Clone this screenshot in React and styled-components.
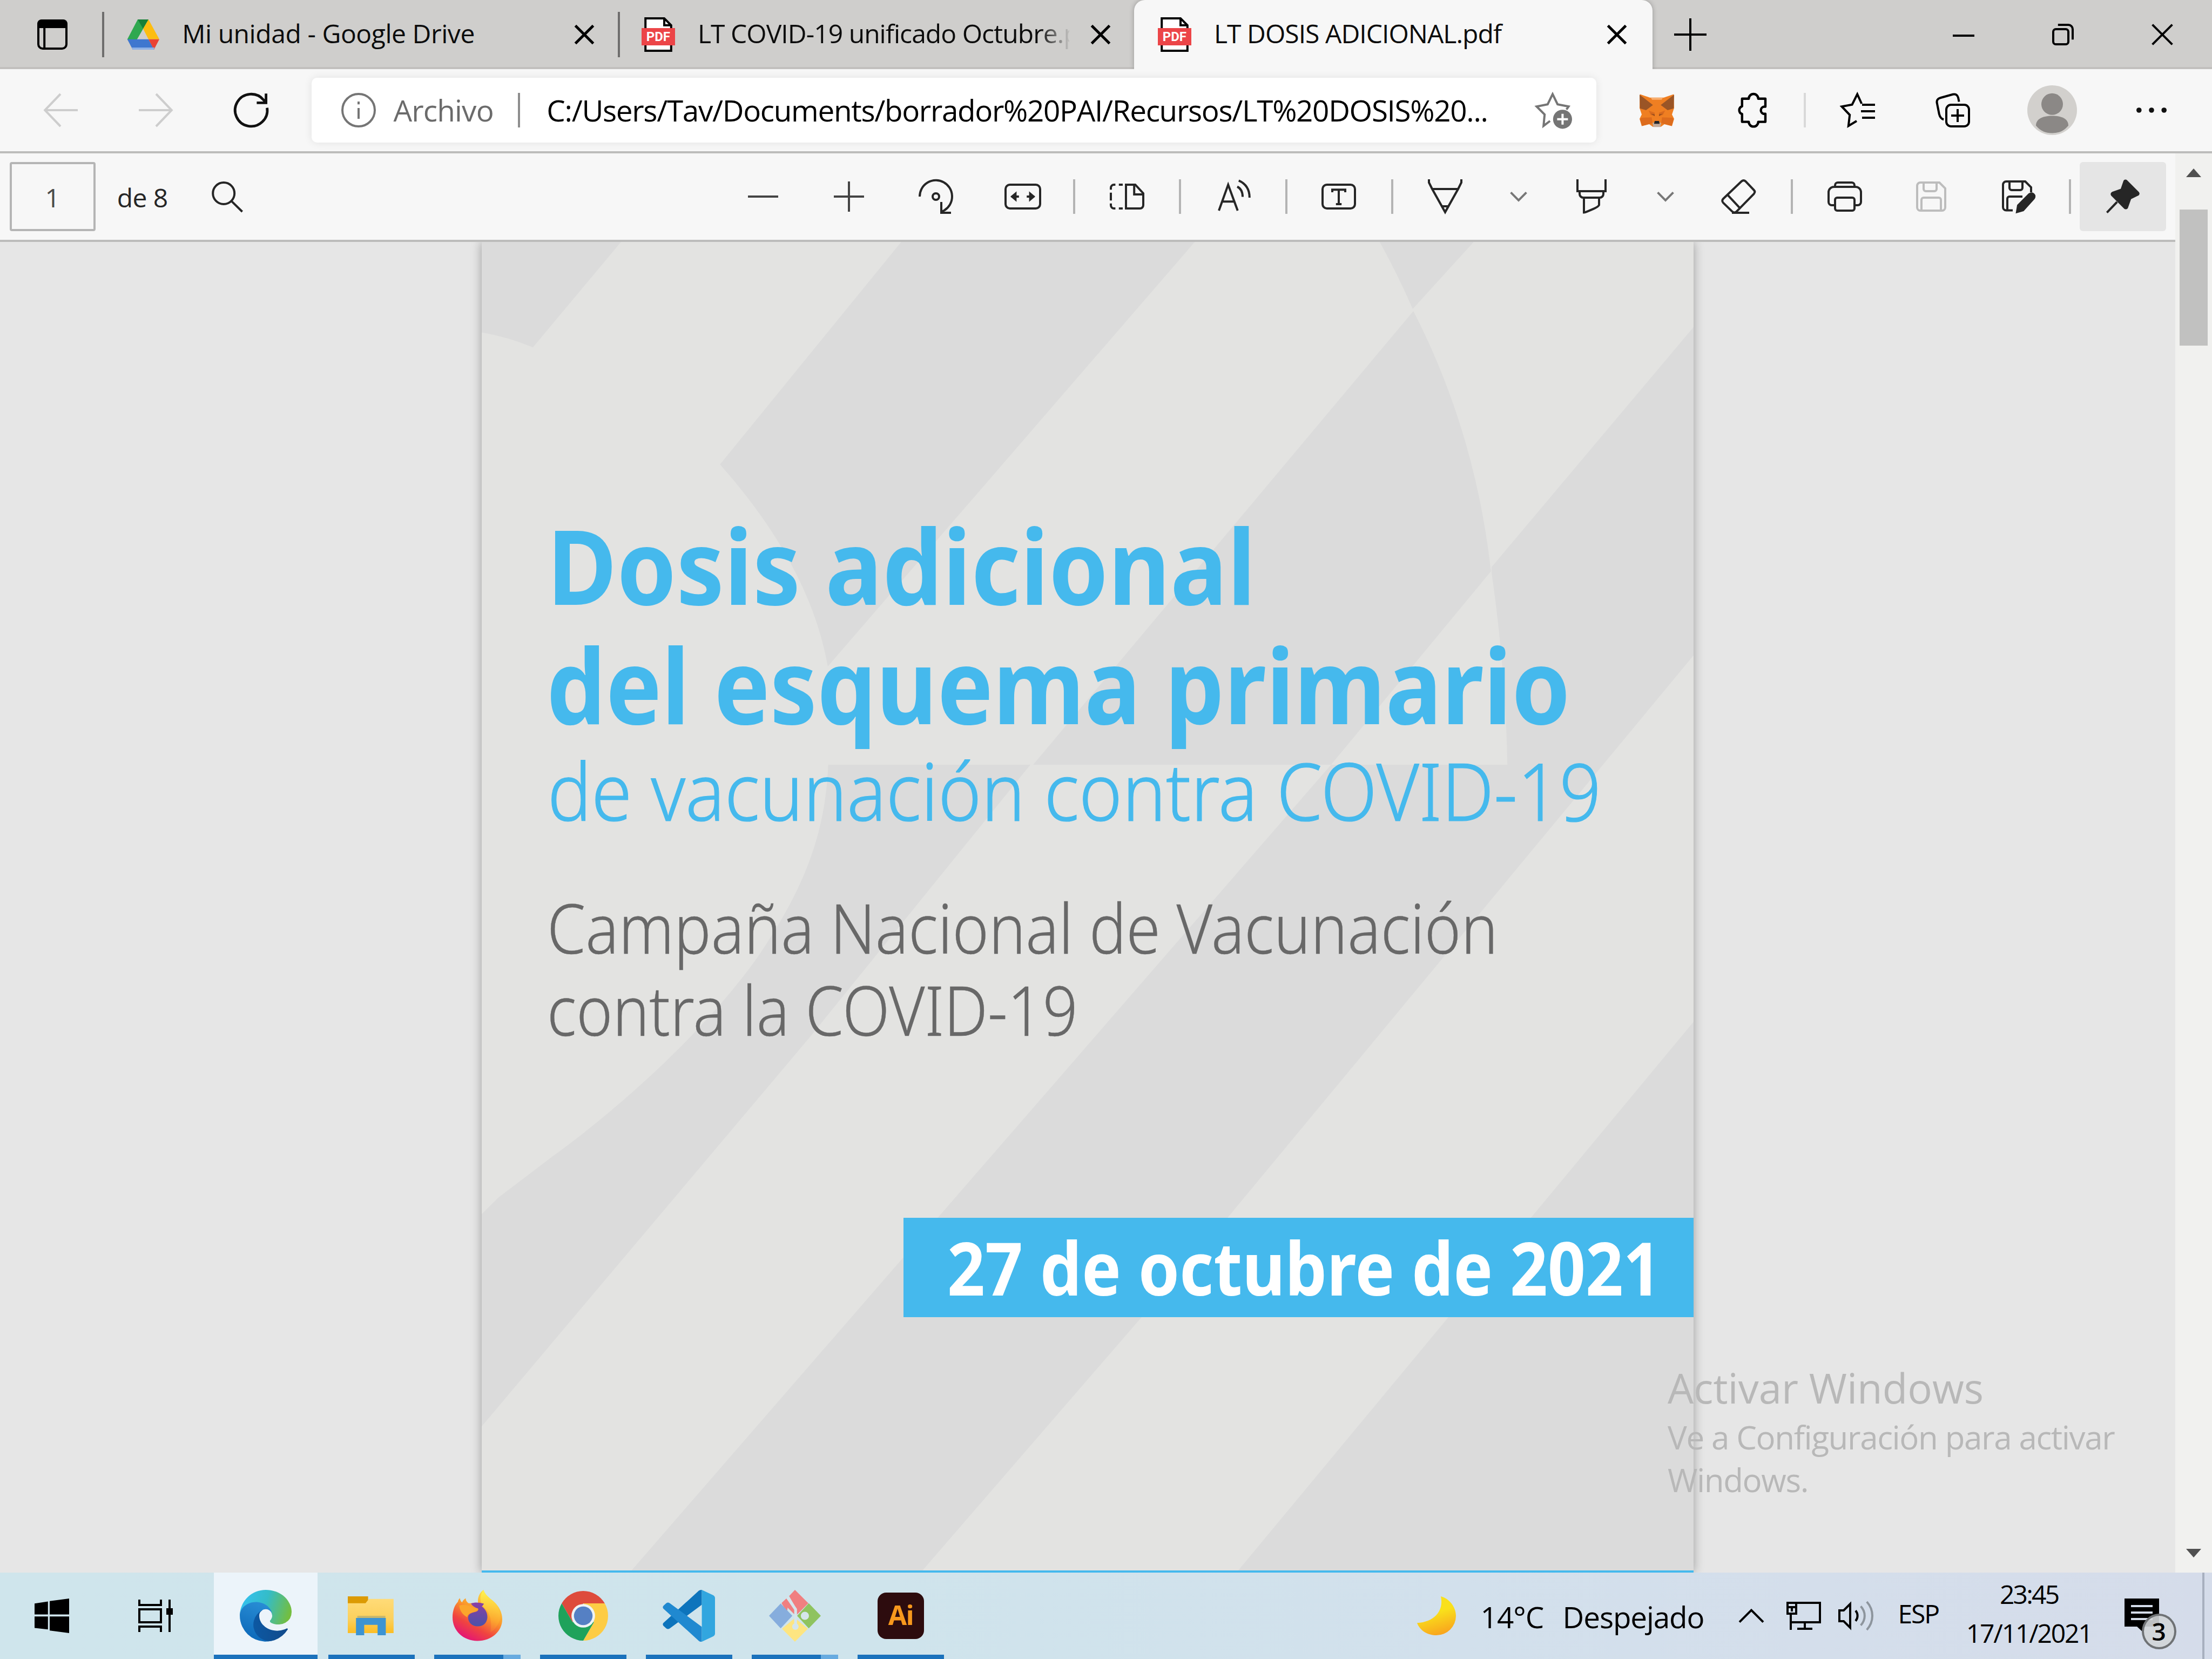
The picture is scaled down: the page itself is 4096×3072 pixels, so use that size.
import React from "react";
import styled, { createGlobalStyle } from "styled-components";

/* One rem is one desktop pixel of a 1024x768 screen. */
const GlobalStyle = createGlobalStyle`
  html { font-size: 4px; }
  body { margin: 0; background: #e6e6e6; }
  *, *::before, *::after { box-sizing: border-box; }
`;

const ui = `"Open Sans", "Noto Sans", sans-serif`;
const docFont = `"Noto Sans", "Open Sans", sans-serif`;

const Screen = styled.div`
  position: relative;
  width: 1024rem;
  height: 768rem;
  display: flex;
  flex-direction: column;
  overflow: hidden;
  background: #e6e6e6;
  color: #000;
  font-family: ${ui};
`;

const Icon = styled.svg`
  display: block;
  flex: none;
  width: ${(p) => p.$w || 16}rem;
  height: ${(p) => p.$h || 16}rem;
  margin-left: ${(p) => p.$ml || 0}rem;
  color: ${(p) => p.$c || "#1a1a1a"};
  fill: none;
  stroke: currentColor;
  stroke-width: 1;
  overflow: visible;
`;

const Text = styled.span`
  display: block;
  flex: none;
  white-space: nowrap;
  width: ${(p) => (p.$w ? `${p.$w}rem` : "auto")};
  margin-left: ${(p) => p.$ml || 0}rem;
  margin-top: ${(p) => p.$mt || 0}rem;
  font-size: ${(p) => p.$fs || 12}rem;
  line-height: 1.36;
  letter-spacing: ${(p) => p.$ls || 0}rem;
  color: ${(p) => p.$c || "#000"};
`;

const Rule = styled.div`
  flex: none;
  width: 1rem;
  height: ${(p) => p.$h || 16}rem;
  margin-left: ${(p) => p.$ml || 0}rem;
  background: ${(p) => p.$c || "#b4b4b4"};
`;

/* ---------- tab strip ---------- */

const TabStrip = styled.header`
  flex: none;
  display: flex;
  align-items: center;
  height: 32rem;
  background: linear-gradient(#cfcecc 0 31rem, #c2c0be 31rem 32rem);
`;

const TabBox = styled.div`
  position: relative;
  flex: none;
  display: grid;
  grid-template-columns: 16rem 1fr 9rem;
  column-gap: 10rem;
  align-items: center;
  width: ${(p) => p.$w}rem;
  height: 32rem;
  padding: 0 ${(p) => (p.$active ? 12 : 11)}rem 0 ${(p) => (p.$active ? 11 : 10)}rem;
  border-radius: 5rem 5rem 0 0;
  background: ${(p) => (p.$active ? "#f7f7f7" : "transparent")};
  box-shadow: ${(p) => (p.$active ? "0 0 2.5rem rgba(0,0,0,.28)" : "none")};
  clip-path: ${(p) => (p.$active ? "inset(0 -4rem 0 -4rem)" : "none")};
  z-index: ${(p) => (p.$active ? 1 : 0)};
`;

const TabTitle = styled(Text)`
  overflow: hidden;
  margin-bottom: 1.2rem;
  mask-image: ${(p) => (p.$fade ? "linear-gradient(90deg, #000 158rem, transparent 173rem)" : "none")};
`;

const CloseIcon = ({ size = 9, w = 1.3, ml = 0 }) => (
  <Icon $w={size} $h={size} $ml={ml} $c="#000" viewBox="0 0 10 10">
    <path strokeWidth={w} d="M.4.4 9.6 9.6M9.6.4.4 9.6" />
  </Icon>
);

const DriveLogo = () => (
  <Icon viewBox="0 0 16 16">
    <g stroke="none">
      <path fill="#2fa84f" d="M5.5 1h5L5.200 10.200 3 13.600.7 10.200z" />
      <path fill="#188038" d="M5.500 1h5L8 5.300z" />
      <path fill="#fdbd10" d="M10.500 1l5 9.200h-5L8 5.300z" />
      <path fill="#3f77cf" d="M.7 10.200h9.800l2.600 4.800H3.200z" />
      <path fill="#ea4335" d="M10.500 10.200h5L13 15z" />
      <path fill="#8fb1e6" d="M2.700 14h10.600l-.4 1H3.200z" />
    </g>
  </Icon>
);

const PdfBadge = styled.span`
  position: absolute;
  left: 0;
  top: 5rem;
  width: 15.4rem;
  height: 8rem;
  background: #ec4548;
  color: #fff;
  font: 700 6rem/8rem "Roboto", sans-serif;
  text-align: center;
`;
const PdfWrap = styled.span`
  position: relative;
  width: 16rem;
  height: 16rem;
`;
const PdfFile = () => (
  <PdfWrap>
    <Icon $c="#000" viewBox="0 0 16 16">
      <path fill="#fff" d="M1.800.5h8.700l3.200 3.200v11.800H1.800z" />
      <path d="M10.500.5v3.200h3.200" />
    </Icon>
    <PdfBadge>PDF</PdfBadge>
  </PdfWrap>
);

const Tab = ({ w, icon, title, ls, active, fade }) => (
  <TabBox $w={w} $active={active}>
    {icon}
    <TabTitle $ls={ls} $fade={fade} $c="#0c0c0c">{title}</TabTitle>
    <CloseIcon w={1.4} />
  </TabBox>
);

/* ---------- navigation bar ---------- */

const NavBar = styled.nav`
  flex: none;
  display: flex;
  align-items: center;
  height: 39rem;
  padding-left: 20rem;
  background: #f7f7f7;
  border-bottom: 1rem solid #bcbcbb;
`;

const Address = styled.div`
  flex: none;
  display: flex;
  align-items: center;
  width: 594.6rem;
  height: 30rem;
  margin-left: 20rem;
  padding-left: 13.8rem;
  background: #fff;
  border-radius: 2.5rem;
  box-shadow: 0 0 4rem rgba(0, 0, 0, 0.09);
`;

const Fox = () => (
  <Icon $ml={20} viewBox="0 0 16 16">
    <g stroke="none">
      <path fill="#ef7f22" d="M.2.6 4.800 2.200h6.400L15.800.6 16 7l-1 3 1 2-1 3.400-3.500-.9-1.600 1.200H6.100l-1.600-1.200-3.500.9L0 12l1-2-1-3z" />
      <path fill="#9a5526" d="M0 .8 6.200 5.600 3 8 .2 7.200zM16 .8 9.800 5.600 13 8l2.800-.8z" />
      <path fill="#f8ae70" d="M5.200 2.200h5.600l-.6 1H5.800z" />
      <path fill="#d86a1e" d="M4.200 8.200 7 9.200v1.600l-1.800-.6zM11.800 8.200 9 9.200v1.600l1.800-.6z" />
      <path fill="#8a4a1e" d="M5.200 9.600 7 10v.7zM10.800 9.600 9 10v.7z" />
      <path fill="#dd6c1d" d="m1 11.500 4.600-.2L6 14 4.500 14.400l-3.400.9-.9-3.200zM15 11.500l-4.600-.2L10 14l1.500.4 3.400.9.900-3.200z" />
      <path fill="#c4ab9a" d="M6 13.800h4l-.4 2H6.400z" />
      <path fill="#20242a" d="M7 13h2l.3 1.300H6.700z" />
    </g>
  </Icon>
);

/* ---------- viewer ---------- */

const Viewer = styled.div`
  flex: 1;
  display: flex;
  min-height: 0;
`;
const ViewerMain = styled.main`
  flex: none;
  width: 1007rem;
  display: flex;
  flex-direction: column;
`;
const PdfBar = styled.div`
  flex: none;
  display: flex;
  align-items: center;
  height: 41rem;
  padding-left: 4.4rem;
  background: #f7f7f7;
  border-bottom: 1rem solid #bcbcbb;
`;
const PageInput = styled.div`
  flex: none;
  display: flex;
  align-items: center;
  justify-content: center;
  width: 39.8rem;
  height: 32rem;
  border: 1rem solid #b5b5b5;
  border-radius: 1rem;
`;
const PinButton = styled.div`
  flex: none;
  display: flex;
  align-items: center;
  justify-content: center;
  width: 40rem;
  height: 32rem;
  margin-left: 4rem;
  border-radius: 1.5rem;
  background: #e5e5e5;
`;

const Scrollbar = styled.aside`
  flex: none;
  display: flex;
  flex-direction: column;
  align-items: center;
  width: 17rem;
  padding: 7rem 0 7rem 0;
  background: #f1f1ef;
`;
const ScrollThumb = styled.div`
  width: 12.8rem;
  height: 63rem;
  margin: 15rem 0 auto;
  background: #c1c1c0;
`;

const Canvas = styled.div`
  flex: 1;
  display: flex;
  padding-left: 223rem;
  background: #e6e6e6;
  overflow: hidden;
`;
const Page = styled.article`
  position: relative;
  display: flex;
  flex-direction: column;
  width: 561rem;
  height: 616rem;
  padding-top: 122.1rem;
  background: #e3e3e1;
  border-bottom: 1rem solid #45b9ed;
  box-shadow: 0 0 4.5rem rgba(0, 0, 0, 0.32);
  font-family: ${docFont};
`;
const Backdrop = styled.svg`
  position: absolute;
  inset: 0;
  width: 561rem;
  height: 615rem;
  fill: #dbdbdb;
`;
const Line = styled.div`
  position: relative;
  width: max-content;
  margin: ${(p) => p.$mt || 0}rem 0 0 ${(p) => p.$x}rem;
  white-space: nowrap;
  font-size: ${(p) => p.$fs}rem;
  line-height: ${(p) => p.$lh}rem;
  font-weight: ${(p) => p.$fw};
  color: ${(p) => p.$c};
  -webkit-text-stroke: ${(p) => p.$thick || 0}rem ${(p) => p.$c};
  transform: scaleX(${(p) => p.$sx || 1});
  transform-origin: 0 50%;
`;
const DateBanner = styled.div`
  position: relative;
  align-self: flex-end;
  width: 365.8rem;
  height: 46rem;
  margin-top: 77.3rem;
  background: #45b9ed;
`;

const Watermark = styled.div`
  position: absolute;
  left: 772rem;
  top: 629.5rem;
`;

/* ---------- taskbar ---------- */

const Taskbar = styled.footer`
  flex: none;
  display: flex;
  align-items: center;
  height: 40rem;
  background: linear-gradient(90deg, #cfe5ec, #cfe4ec 40%, #d2e0ec 66%, #d4deeb 82%, #d5dcea);
`;
const AppSlot = styled.div`
  position: relative;
  flex: none;
  display: flex;
  align-items: center;
  justify-content: center;
  width: 48rem;
  height: 40rem;
  margin-left: ${(p) => p.$ml || 0}rem;
  background: ${(p) => (p.$active ? "#ecf4fa" : "transparent")};
  &::after {
    content: "";
    display: ${(p) => (p.$open ? "block" : "none")};
    position: absolute;
    bottom: 0;
    left: ${(p) => (p.$active ? 0 : 4)}rem;
    right: ${(p) => (p.$active ? 0 : 4)}rem;
    height: 2rem;
    background: ${(p) => (p.$multi ? "linear-gradient(90deg, #1b72bc 32rem, #68abe0 32rem)" : "#1b72bc")};
  }
`;
const Clock = styled.div`
  flex: none;
  width: 60rem;
  margin-left: 9.8rem;
  margin-bottom: 2rem;
  display: flex;
  flex-direction: column;
  align-items: center;
  gap: 1.7rem;
`;
const Notice = styled.div`
  position: relative;
  flex: none;
  width: 16rem;
  height: 16rem;
  margin-left: 14.3rem;
`;
const NoticeCount = styled.span`
  position: absolute;
  left: 7.8rem;
  top: 7rem;
  width: 16rem;
  height: 16.5rem;
  border: 1rem solid #6f7275;
  border-radius: 50%;
  background: rgba(210, 213, 216, 0.9);
  font: 600 11.5rem/14rem ${ui};
  text-align: center;
`;

const AiTile = styled.div`
  width: 21.6rem;
  height: 21.6rem;
  border-radius: 4rem;
  background: #2d0c0e;
  color: #f7981d;
  font: 700 12.5rem/20.6rem ${ui};
  letter-spacing: -0.4rem;
  text-align: center;
`;

const EdgeLogo = () => (
  <Icon $w={24} $h={24} viewBox="0 0 256 256">
    <defs>
      <linearGradient id="eg1" x1="0" x2="1"><stop offset="0" stopColor="#0c59a4" /><stop offset="1" stopColor="#114a8b" /></linearGradient>
      <linearGradient id="eg2" x1=".6" y1="0" x2=".3" y2="1"><stop offset="0" stopColor="#2a8fd6" /><stop offset="1" stopColor="#0b67b8" /></linearGradient>
      <linearGradient id="eg3" x1="0" y1=".3" x2="1" y2=".5"><stop offset="0" stopColor="#35c1f1" /><stop offset=".5" stopColor="#34bcc8" /><stop offset="1" stopColor="#74be3f" /></linearGradient>
    </defs>
    <g stroke="none">
      <path transform="translate(-4.63 -4.92)" fill="url(#eg1)" d="M235.68 195.46a93.73 93.73 0 0 1-10.54 4.71 101.87 101.87 0 0 1-35.9 6.46c-47.32 0-88.54-32.55-88.54-74.32A31.48 31.48 0 0 1 117.13 105c-42.8 1.8-53.8 46.4-53.8 72.53 0 73.88 68.09 81.37 82.76 81.37 7.91 0 19.84-2.3 27-4.56l1.31-.44a128.34 128.34 0 0 0 66.6-52.8 4 4 0 0 0-5.32-5.64z" />
      <path fill="url(#eg2)" d="M105.73 241.42A79.2 79.2 0 0 1 83 220.08a80.72 80.72 0 0 1 29.5-120.79c3.12-1.47 8.45-4.13 15.54-4a32.35 32.35 0 0 1 25.69 13 31.88 31.88 0 0 1 6.36 18.66c0-.21 24.46-79.6-80-79.6-43.9 0-80 41.66-80 78.21a130.15 130.15 0 0 0 12.11 56 128 128 0 0 0 156.38 67.11 75.55 75.55 0 0 1-62.78-8z" />
      <path fill="url(#eg3)" d="M152.33 148.86c-.81 1.05-3.3 2.5-3.3 5.66 0 2.61 1.7 5.12 4.72 7.23 14.38 10 41.49 8.68 41.56 8.68a59.56 59.56 0 0 0 30.27-8.35A61.38 61.38 0 0 0 256 109.19c.26-22.41-8-37.31-11.34-43.91C223.46 23.84 177.72 0 128 0A128 128 0 0 0 0 126.2c.48-36.54 36.8-66.05 80-66.05 3.5 0 23.46.34 42 10.07 16.34 8.58 24.9 18.94 30.85 29.21 6.18 10.67 7.28 24.15 7.28 29.52s-2.74 13.33-7.8 19.91z" />
    </g>
  </Icon>
);

const FolderLogo = () => (
  <Icon $w={22} $h={18} viewBox="0 0 22 18">
    <defs>
      <linearGradient id="fo" x1="0" y1="0" x2="0" y2="1"><stop offset="0" stopColor="#ffdb78" /><stop offset=".6" stopColor="#fbd05c" /><stop offset="1" stopColor="#fcbd22" /></linearGradient>
    </defs>
    <g stroke="none">
      <path fill="#dc9a04" d="M0 0h9.400v3.400H0z" />
      <path fill="url(#fo)" d="M0 3.200h8.200L9.800 1.200h11.400V17H0z" />
      <path fill="#c9b76b" d="M4.400 9h13v1.300h-13z" />
      <path fill="#3c94d2" d="M3.800 10h13.800v8h-3.800v-4.800H7.600V18H3.800z" />
    </g>
  </Icon>
);

const FirefoxLogo = () => (
  <Icon $w={24} $h={24} viewBox="0 0 24 24">
    <defs>
      <linearGradient id="ff1" x1=".8" y1=".1" x2=".3" y2="1"><stop offset="0" stopColor="#fde047" /><stop offset=".4" stopColor="#fb9a2b" /><stop offset=".7" stopColor="#f0453f" /><stop offset="1" stopColor="#e3117a" /></linearGradient>
      <linearGradient id="ff2" x1=".5" y1="0" x2=".5" y2="1"><stop offset="0" stopColor="#fff44f" /><stop offset="1" stopColor="#fca62b" stopOpacity=".2" /></linearGradient>
      <linearGradient id="ff3" x1=".5" y1="0" x2=".5" y2="1"><stop offset="0" stopColor="#8a3fa5" /><stop offset="1" stopColor="#4b52a8" /></linearGradient>
    </defs>
    <g stroke="none">
      <path fill="url(#ff1)" d="M14.8 0c.9 2.7 3 3.8 5 5.6 2.1 2 3.7 4.6 3.7 8C23.5 19.2 18.5 23.6 12 23.6S.5 19 .5 12.7c0-3.2 1-5.7 2.500-7.2.1-.8.4-1.2.9-1.7.1.9.5 1.6 1 2 .4-.8.9-1.4 1.7-1.9 0 .9.4 1.7 1.2 2.2C8.8 6.300 10.800 6 12.300 6c-.3-2.400.6-4.600 2.500-6z" />
      <path fill="url(#ff2)" d="M14.8 0c.9 2.7 3 3.8 5 5.6 2 2 3.2 5 2.700 8-1 3-2.500 5-4.500 6 .8-4.500.2-8.600-2.500-11-2.200-2-3-5.500-.7-8.600z" />
      <path fill="url(#ff3)" d="M9 6.300c1.600-.6 3.800-.6 6 .1-.2.600-.5.900-1 1.200 2 1.400 2.800 3.600 2.600 5.400-.3 2.400-2 3.900-4.400 3.900-2.700 0-4.500-1.900-4.500-4.100 0-1.700 1.500-2.200 3.600-2.700.9-.3 1.300-.9 1-1.500-1.500-.4-2.600-1.100-3.300-2.300z" />
      <path fill="#fba52b" d="M3.600 7.200C5.800 6.600 8 7 9.400 8c.9.600 1.800.7 2.600.7-.2 1-1 1.400-2 1.700-1.600.4-2.600 1-2.700 2.300-1.900-1-3.600-3-3.700-5.500z" />
    </g>
  </Icon>
);

const ChromeLogo = () => (
  <Icon $w={23} $h={23} viewBox="-12 -12 24 24">
    <g stroke="none">
      <path fill="#de4b3c" d="M-10.390-6A12 12 0 0 1 10.390-6L0-6-5.200 3z" />
      <path fill="#fdcc45" d="M10.390-6A12 12 0 0 1 0 12L5.200 3 0-6z" />
      <path fill="#1fa25b" d="M0 12A12 12 0 0 1-10.390-6L-5.200 3 5.200 3z" />
      <circle r="5.700" fill="#eef3f6" />
      <circle r="4.500" fill="#5580c4" />
    </g>
  </Icon>
);

const CodeLogo = () => (
  <Icon $w={24} $h={24} viewBox="0 0 24 24">
    <g stroke="none">
      <path fill="#0d74bc" d="M17.900 0v6.900L3 17.900c-.6.400-1.100.3-1.600-.1l-1.100-1c-.6-.6-.6-1.200 0-1.700L16.500.4c.4-.3.900-.5 1.400-.4z" />
      <path fill="#2089d0" d="M17.900 24v-6.900L3 6.100c-.6-.4-1.100-.3-1.600.1l-1.100 1c-.6.600-.6 1.200 0 1.700l16.200 14.700c.4.300.9.500 1.400.4z" />
      <path fill="#32a6df" d="M17.900 0 23.200 2.500c.5.300.8.700.8 1.300v16.400c0 .6-.3 1-.8 1.300L17.900 24z" />
    </g>
  </Icon>
);

const GitLogo = () => (
  <Icon $w={24} $h={24} viewBox="0 0 24 24">
    <g stroke="none">
      <path fill="#f07f80" d="m12 0 6.200 6.200L12.400 12 8.600 8.200l-.2 2.200-2.600-4.200 2.800-2.500L12 7.500 9.300 2.900z" />
      <path fill="#f07f80" d="m5.900 6 2.300-2.200 3.300 6z" />
      <path fill="#86addd" d="M5.400 6.300 10.800 12l-5.400 5.800L0 12z" />
      <path fill="#fde581" d="m12 13 6 5-6 6-6-6z" />
      <path fill="#8fc35f" d="m18.400 6.200 5.600 5.800-5.600 5.800-5.400-5.800z" />
      <circle cx="16.600" cy="12" r="1.900" fill="#d5e6ec" />
      <path stroke="#d5e6ec" strokeWidth="1.300" d="M8.500 3.500 12.300 9v8.500" />
      <circle cx="12.200" cy="17" r="1.500" fill="#d5e6ec" />
    </g>
  </Icon>
);

export default function App() {
  return (
    <>
      <GlobalStyle />
      <Screen>
        <TabStrip>
          <Icon $w={14} $h={14} $ml={17.3} $c="#000" viewBox="0 0 14 14">
            <rect x=".5" y=".5" width="13" height="13" rx="2" />
            <path fill="#000" stroke="none" d="M0 4V2a2 2 0 0 1 2-2h10a2 2 0 0 1 2 2v2z" />
            <path d="M3.300 4v9.500" />
          </Icon>
          <Rule $h={21} $ml={16} $c="#6f6e6d" />
          <Tab w={237.7} icon={<DriveLogo />} title="Mi unidad - Google Drive" ls={-0.11} />
          <Rule $h={21} $c="#6f6e6d" />
          <Tab w={238} icon={<PdfFile />} title="LT COVID-19 unificado Octubre.pdf" ls={-0.24} fade />
          <Tab w={240} icon={<PdfFile />} title="LT DOSIS ADICIONAL.pdf" ls={-0.24} active />
          <Icon $w={15} $h={15} $ml={9.9} $c="#000" viewBox="0 0 15 15"><path d="M7.500 0v15M0 7.500h15" /></Icon>
          <Icon $w={10} $h={10} $ml={114} $c="#000" viewBox="0 0 10 10"><path d="M0 5.500h10" /></Icon>
          <Icon $w={10} $h={10} $ml={36} $c="#000" viewBox="0 0 10 10">
            <rect x=".5" y="2.500" width="7" height="7" rx="1.200" />
            <path d="M2.700.5h4.800a2 2 0 0 1 2 2v4.800" />
          </Icon>
          <CloseIcon size={10} w={1} ml={36} />
        </TabStrip>

        <NavBar>
          <Icon $c="#cdcdcd" viewBox="0 0 16 16"><path d="M8 .5.800 8 8 15.500M.8 8H16" /></Icon>
          <Icon $ml={28.3} $c="#cdcdcd" viewBox="0 0 16 16"><path d="M8 .5 15.200 8 8 15.500M15.200 8H0" /></Icon>
          <Icon $ml={28} viewBox="0 0 16 16" $c="#111">
            <path strokeWidth="1.200" d="M15.400 6.900A7.450 7.450 0 1 1 13.800 3.300L14.900 4.500M14.900.3v4.300h-4.300" />
          </Icon>
          <Address>
            <Icon $c="#757575" viewBox="0 0 16 16">
              <circle cx="8" cy="8" r="7.500" />
              <path d="M8 7v5M8 4v1.300" />
            </Icon>
            <Text $ml={8} $w={46.5} $fs={13.7} $ls={-0.2} $c="#6b6b6b">Archivo</Text>
            <Rule $ml={11.2} $c="#8d8d8d" />
            <Text $ml={12.3} $w={446.3} $fs={13.7} $ls={-0.33}>C:/Users/Tav/Documents/borrador%20PAI/Recursos/LT%20DOSIS%20...</Text>
            <Icon $w={17} $ml={11.4} $c="#757575" viewBox="0 0 17 16">
              <path d="M6.800 13 3.800 15.300 4.300 10 .6 6.300 5.700 5.300 8 .6l2.300 4.700 5.100 1-1 1.400" />
              <circle cx="12.600" cy="12.200" r="4.400" fill="#757575" stroke="none" />
              <path stroke="#fff" d="M12.600 9.700v5M10.100 12.200h5" />
            </Icon>
          </Address>
          <Fox />
          <Icon $w={14} $ml={28.9} $c="#000" viewBox="0 0 14 16">
            <path strokeWidth="1.100" strokeLinejoin="round" d="M2.700 2.700H5.800a2.200 2.200 0 0 1 4.400 0h3.300v3.700h-.8a1.700 1.700 0 0 0 0 3.300h.8v3.700h-3.300a2.200 2.200 0 0 1-4.400 0H2.700v-3.600a1.900 1.900 0 0 1 0-3.600z" />
          </Icon>
          <Rule $ml={17.1} $c="#d9d9d9" />
          <Icon $ml={16} $c="#000" viewBox="0 0 16 16">
            <path d="M7.500 13 3.700 15.300 4.300 10.200.6 6.300 5.400 5.400 7.800.6l2 4.400M10 5.500h6M9.500 8.500H16M10 11.500h6" />
          </Icon>
          <Icon $ml={28} $c="#000" viewBox="0 0 16 16">
            <path d="M3.800 12.300C2.500 12 2 11 1.700 9.800L.7 4.800C.4 3.500 1 2.600 2.200 2.300L8 .7c1.300-.3 2.200.3 2.500 1.500l.4 1.900" />
            <rect x="5" y="5.500" width="10.500" height="10" rx="2.200" />
            <path d="M10.250 7.500v6M7.250 10.500h6" />
          </Icon>
          <Icon $w={23} $h={23} $ml={26.5} viewBox="0 0 23 23">
            <g stroke="none">
              <circle cx="11.500" cy="11.500" r="11.500" fill="#d2d0cd" />
              <circle cx="11.500" cy="8.700" r="5" fill="#8b8886" />
              <path fill="#8b8886" d="M4 18.600c0-3 3-4.500 7.500-4.500s7.500 1.500 7.500 4.500c-2 2.500-4.500 3.500-7.500 3.500s-5.500-1-7.500-3.500z" />
            </g>
          </Icon>
          <Icon $w={14} $h={2} $ml={27.6} viewBox="0 0 14 2">
            <g fill="#111" stroke="none"><circle cx="1.200" cy="1" r="1.200" /><circle cx="7" cy="1" r="1.200" /><circle cx="12.800" cy="1" r="1.200" /></g>
          </Icon>
        </NavBar>

        <Viewer>
          <ViewerMain>
            <PdfBar>
              <PageInput><Text $mt={0.6} $c="#4a4a4a">1</Text></PageInput>
              <Text $ml={10} $mt={0.6} $w={24} $ls={-0.15} $c="#262626">de 8</Text>
              <Icon $w={15} $h={14} $ml={19.6} $c="#262626" viewBox="0 0 15 14">
                <circle cx="5.800" cy="5.500" r="5" /><path d="M9.400 9.100 14.400 14" />
              </Icon>
              <Icon $w={14} $h={14} $ml={233.4} $c="#444" viewBox="0 0 14 14"><path d="M0 7h14" /></Icon>
              <Icon $w={14} $h={14} $ml={25.8} $c="#444" viewBox="0 0 14 14"><path d="M7 0v14M0 7h14" /></Icon>
              <Icon $ml={25.2} $c="#262626" viewBox="0 0 16 16">
                <path d="M.5 8A7.500 7.500 0 1 1 12 14.300l-1.500.8M10.500 10.500v5h4.500" />
                <circle cx="8" cy="8" r="1.500" />
              </Icon>
              <Icon $w={17} $h={12} $ml={23.9} $c="#262626" viewBox="0 0 17 12">
                <rect x=".5" y=".5" width="16" height="11" rx="2" />
                <path d="M3.200 6h3.500M10.300 6h3.500" />
                <path fill="#262626" strokeWidth=".6" d="M5.300 4.200 3.200 6l2.100 1.800zM11.700 4.200 13.800 6l-2.100 1.800z" />
              </Icon>
              <Rule $ml={14.7} />
              <Icon $h={12} $ml={16} $c="#262626" viewBox="0 0 16 12">
                <path d="M7.500.5h4.300l3.700 4V10a1.500 1.500 0 0 1-1.500 1.500H7.500z" />
                <path d="M11.300.5V5h4.200M6 .5H4.200M2.600.5h-.6A1.500 1.500 0 0 0 .5 2v.8M.5 4.200v3.600M.5 9.200v.8A1.500 1.500 0 0 0 2 11.500h.6M4.200 11.500H6" />
              </Icon>
              <Rule $ml={16} />
              <Icon $ml={17} $c="#262626" viewBox="0 0 16 16">
                <path d="M.5 14.500 4.800 2.500 9.200 14.500M2 10.300h5.600M9 3.400c1.600.8 2.500 2.300 2.500 4.700M9.700.6c3.200 1.400 5 4.100 5 7.900" />
              </Icon>
              <Rule $ml={15.1} />
              <Icon $h={12} $ml={15.9} $c="#262626" viewBox="0 0 16 12">
                <rect x=".5" y=".5" width="15" height="11" rx="2" />
                <path d="M5 4V2.800h6V4M8 2.800v6.700M6.700 9.500h2.600" />
              </Icon>
              <Rule $ml={16.2} />
              <Icon $ml={16} $c="#262626" viewBox="0 0 16 16">
                <path d="M.5 0v1.500L2 4.500 8 15.200 14 4.500l1.500-3V0M1.700 4.500h12.600M6.800 12.500h2.400" />
              </Icon>
              <Icon $w={8} $h={5} $ml={22} $c="#777" viewBox="0 0 8 5"><path d="M.4.6 4 4.200 7.600.6" /></Icon>
              <Icon $w={14} $ml={22.8} $c="#262626" viewBox="0 0 14 16">
                <path d="M.5 0v5.500h13V0M1.500 5.500v1.300a1.700 1.700 0 0 0 1.700 1.700h7.600a1.700 1.700 0 0 0 1.700-1.700V5.500M3.500 8.500v6.900c.3 0 7-2.400 7-3.600V8.500" />
              </Icon>
              <Icon $w={8} $h={5} $ml={23.2} $c="#777" viewBox="0 0 8 5"><path d="M.4.6 4 4.200 7.600.6" /></Icon>
              <Icon $ml={21.8} $c="#262626" viewBox="0 0 16 16">
                <path d="M11.300.9 15.200 5c.5.500.5 1.100 0 1.700L7.300 14.800c-.7.700-1.600.7-2.300 0L1 10.900c-.6-.6-.6-1.300 0-1.900L9.500.9c.6-.5 1.200-.5 1.800 0zM3 7.200l5.600 6M5 15.500h8" />
              </Icon>
              <Rule $ml={16.2} />
              <Icon $h={14} $ml={16} $c="#262626" viewBox="0 0 16 14">
                <path d="M3 11H2A1.500 1.500 0 0 1 .5 9.500V5A2.500 2.500 0 0 1 3 2.500h10A2.500 2.500 0 0 1 15.500 5v4.500A1.500 1.500 0 0 1 14 11h-1M3.500 2.500V1.800A1.300 1.300 0 0 1 4.800.5h6.400a1.300 1.300 0 0 1 1.300 1.300v.7" />
                <rect x="3.500" y="7.500" width="9" height="6" rx="1" />
              </Icon>
              <Icon $w={14} $h={14} $ml={25} $c="#bdbdbd" viewBox="0 0 14 14">
                <path d="M.5 2A1.500 1.500 0 0 1 2 .5h8.800l2.700 2.700V12a1.500 1.500 0 0 1-1.500 1.500H2A1.500 1.500 0 0 1 .5 12zM3.500.5v3a1 1 0 0 0 1 1h4a1 1 0 0 0 1-1v-3M2.500 13.500V8.500a1 1 0 0 1 1-1h7a1 1 0 0 1 1 1v5" />
              </Icon>
              <Icon $w={15.3} $h={15} $ml={25.7} $c="#262626" viewBox="0 0 15.300 15">
                <path d="M5 13.900H2A1.500 1.500 0 0 1 .5 12.400V2A1.500 1.500 0 0 1 2 .5h8.800l2.700 2.700v2.300M3.500.5v3a1 1 0 0 0 1 1h4a1 1 0 0 0 1-1v-3M2.500 13.500V8.500a1 1 0 0 1 1-1h6" />
                <path fill="#262626" d="M7 14.600l.5-3 5.200-5.200c1.500-1 3 .6 2 2L9.800 13.800z" />
              </Icon>
              <Rule $ml={15.9} />
              <PinButton>
                <Icon $c="#262626" viewBox="0 0 16 16">
                  <path fill="#262626" d="M9.600.8 15 6.200c.3.400.2.900-.3 1l-3.300 1.600-1.500 4.200c-.2.400-.7.500-1 .2L3 7.300c-.3-.4-.2-.8.2-1l4.200-1.500L8.700 1c.2-.4.6-.5.9-.2z" />
                  <path d="M5.300 10.500.6 15.400" />
                </Icon>
              </PinButton>
            </PdfBar>

            <Canvas>
              <Page>
                <Backdrop viewBox="223 112 561 615">
                  <path d="M223 112H287.500L246.700 160.800Q235 156 223 153.900z" />
                  <path d="M417.200 112 333.300 215Q375 262 383.200 308.500L553.100 112z" />
                  <path d="M638.700 112Q647 127 654 143L682.200 112z" />
                  <path d="M654.300 144Q683 200 690.200 264.500L616.200 354H478.300z" />
                  <path d="M690.500 262.500 784 151.400V303.400L568.300 563.700 426.200 728H291.500L616.200 354H697.800Q697 310 690.500 265z" />
                  <path d="M383.400 354H477L375 480 223 660.300V562L230.800 554.300 255.700 535.400C280 518 324 481 351.200 442.400 371 413 382 388 383.400 354z" />
                  <path d="M784 473 572.400 728H784z" />
                </Backdrop>
                <Line $x={30.2} $fs={48} $lh={55.1} $fw={700} $c="#45b9ed" $sx={0.919}>Dosis adicional</Line>
                <Line $x={30} $fs={48} $lh={55.1} $fw={700} $c="#45b9ed" $sx={0.904}>del esquema primario</Line>
                <Line $x={30.5} $fs={37} $lh={42.8} $fw={300} $c="#45b9ed" $sx={0.917} $thick={0.3}>de vacunación contra COVID-19</Line>
                <Line $x={30.3} $mt={23.1} $fs={31.7} $lh={38.1} $fw={300} $c="#686868" $sx={0.903} $thick={0.1}>Campaña Nacional de Vacunación</Line>
                <Line $x={30.3} $fs={31.7} $lh={38.1} $fw={300} $c="#686868" $sx={0.898} $thick={0.1}>contra la COVID-19</Line>
                <DateBanner>
                  <Line $x={20.4} $fs={34} $lh={46} $fw={700} $c="#fff" $sx={0.899}>27 de octubre de 2021</Line>
                </DateBanner>
              </Page>
            </Canvas>
          </ViewerMain>

          <Scrollbar>
            <Icon $w={7} $h={4} viewBox="0 0 7 4"><path fill="#505050" stroke="none" d="M0 4 3.500 0 7 4z" /></Icon>
            <ScrollThumb />
            <Icon $w={7} $h={4} viewBox="0 0 7 4"><path fill="#505050" stroke="none" d="M0 0 3.500 4 7 0z" /></Icon>
          </Scrollbar>
        </Viewer>

        <Taskbar>
          <AppSlot>
            <Icon viewBox="0 0 16 16">
              <path fill="#000" stroke="none" d="M0 2.300 6.200 1.400V7.400H0zM7 1.200 16 0v7.400H7zM0 8.300h6.200v6L0 13.600zM7 8.300h9V16l-9-1.200z" />
            </Icon>
          </AppSlot>
          <AppSlot>
            <Icon $h={15} $c="#000" viewBox="0 0 16 15">
              <path d="M.5 0v2.500h10V0M.5 15v-2.500h10V15" />
              <rect x=".5" y="4.500" width="10" height="6" />
              <path d="M14.500 0v15" />
              <path fill="#000" stroke="none" d="M13 4h3v3h-3z" />
            </Icon>
          </AppSlot>
          <AppSlot $ml={3} $active $open><EdgeLogo /></AppSlot>
          <AppSlot $ml={1} $open><FolderLogo /></AppSlot>
          <AppSlot $ml={1} $open $multi><FirefoxLogo /></AppSlot>
          <AppSlot $ml={1} $open><ChromeLogo /></AppSlot>
          <AppSlot $ml={1} $open><CodeLogo /></AppSlot>
          <AppSlot $ml={1} $open $multi><GitLogo /></AppSlot>
          <AppSlot $ml={1} $open><AiTile>Ai</AiTile></AppSlot>

          <Icon $w={18} $h={18} $ml={214.9} viewBox="0 0 18 18">
            <defs><linearGradient id="mo" x1=".4" y1="0" x2=".7" y2="1"><stop offset=".4" stopColor="#f9e01b" /><stop offset="1" stopColor="#f9a01e" /></linearGradient></defs>
            <path fill="url(#mo)" stroke="none" d="M11 0c4 1 7 5 7 9a9 9 0 0 1-9 9c-4 0-7.600-2-9-5.700 7.500-.3 12.600-5.300 11-12.300z" />
          </Icon>
          <Text $ml={11.5} $mt={1} $w={38} $fs={13.7} $ls={-0.25}>14°C</Text>
          <Text $mt={1} $w={81} $fs={13.7} $ls={-0.28}>Despejado</Text>
          <Icon $w={12} $h={7} $ml={0.4} $c="#000" viewBox="0 0 12 7"><path d="M.5 6.400 6 .9l5.500 5.500" /></Icon>
          <Icon $h={13} $ml={10.3} $c="#000" viewBox="0 0 16 13">
            <path d="M4.500.5h11v9H2.500M8.500 9.500v3M5 12.500h7M2 6v7" />
            <rect x=".5" y=".5" width="4" height="5" />
            <path d="M1 2.500h3M2.500 3v1.500" />
          </Icon>
          <Icon $h={14} $ml={8} $c="#000" viewBox="0 0 16 14">
            <path d="M.5 4.500H2.500L5.500 1.500V12.500L2.500 9.500H.5z" />
            <path d="M8 4.600c1.200 1.400 1.200 3.400 0 4.800" />
            <path stroke="#8d959d" d="M10.400 2.600c2.400 2.600 2.400 6.200 0 8.800M13.200.5c3.400 3.800 3.400 9.200 0 13" />
          </Icon>
          <Text $ml={11.5} $mt={-2} $w={20.9} $fs={12} $ls={-0.5}>ESP</Text>
          <Clock>
            <Text $fs={12} $ls={-0.7}>23:45</Text>
            <Text $fs={12} $ls={-0.55}>17/11/2021</Text>
          </Clock>
          <Notice>
            <Icon viewBox="0 0 16 16">
              <path fill="#000" stroke="none" d="M0 0h16v13h-7v3L5.800 13H0z" />
              <path stroke="#d5dcea" d="M3 3.500h10M3 6.500h10M3 9.500h10" />
            </Icon>
            <NoticeCount>3</NoticeCount>
          </Notice>
          <Rule $ml={19.8} $h={40} $c="#a8b0bf" />
        </Taskbar>

        <Watermark>
          <Text $fs={19} $c="#b8b8b8">Activar Windows</Text>
          <Text $fs={15} $ls={-0.34} $c="#b8b8b8">Ve a Configuración para activar</Text>
          <Text $fs={15} $ls={-0.34} $mt={-0.8} $c="#b8b8b8">Windows.</Text>
        </Watermark>
      </Screen>
    </>
  );
}
